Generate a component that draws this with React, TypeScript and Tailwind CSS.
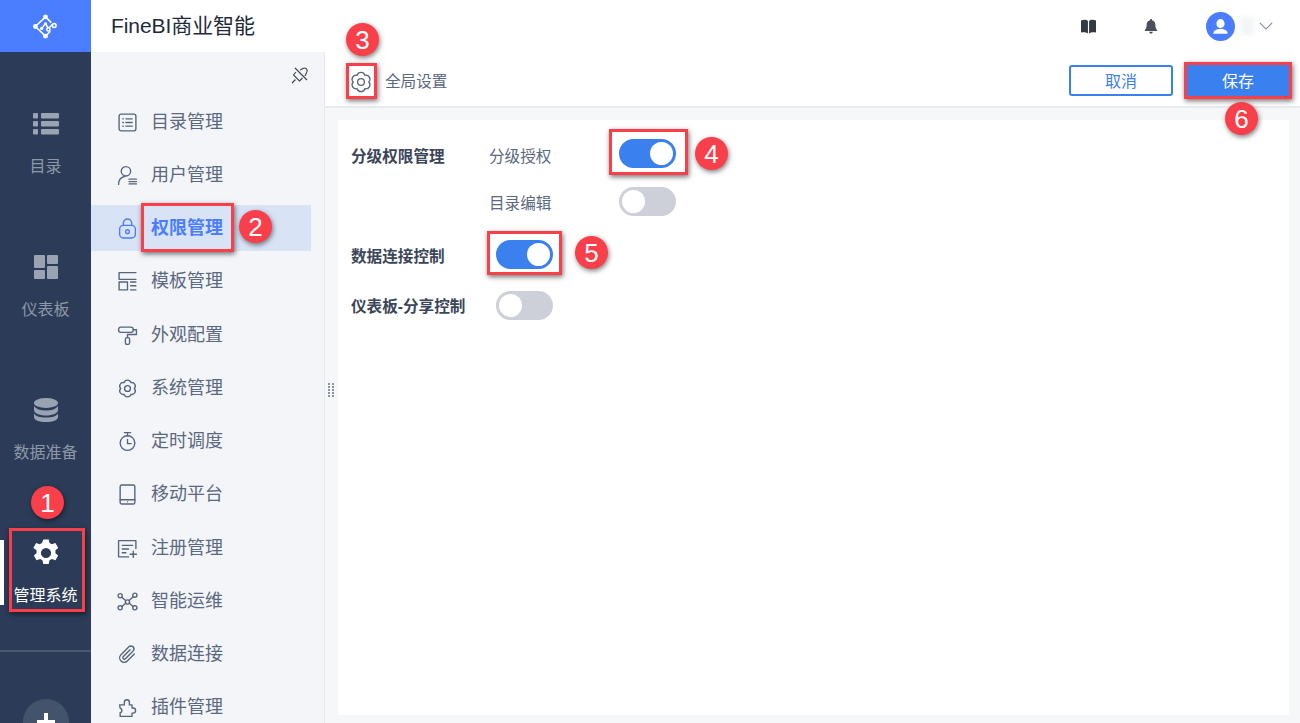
import React from "react";

const I = "w-[21px] h-[21px] text-[#56647c] shrink-0";

function Svg({ children, className = I }: { children: React.ReactNode; className?: string }) {
  return (
    <svg viewBox="0 0 20 20" fill="none" stroke="currentColor" strokeWidth="1.300" strokeLinecap="round" strokeLinejoin="round" className={className}>
      {children}
    </svg>
  );
}

const GearPath = "M16.500 10A3.400 3.400 0 0 1 13.250 15.630A3.400 3.400 0 0 1 6.750 15.630A3.400 3.400 0 0 1 3.500 10A3.400 3.400 0 0 1 6.750 4.370A3.400 3.400 0 0 1 13.250 4.370A3.400 3.400 0 0 1 16.500 10z";

const menu: [string, React.ReactNode][] = [
  ["目录管理", <Svg><rect x="2" y="2" width="16" height="16" rx="2" /><path d="M5.500 6.500h.6M5.500 10h.6M5.500 13.500h.6M8.500 6.500h6M8.500 10h6M8.500 13.500h6" /></Svg>],
  ["用户管理", <Svg><circle cx="8.500" cy="6" r="4.500" /><path d="M1.500 18.500c0-4.500 2.500-7 6-7.800" /><path d="M11.500 13.500h7M11.500 15.800h7M11.500 18h7" /></Svg>],
  ["权限管理", <Svg className="h-[21px] w-[21px] shrink-0 text-[#4a7dff]"><rect x="2.500" y="7" width="15" height="12" rx="3.500" /><path d="M6 7V5a4 4 0 0 1 8 0v2" /><circle cx="10" cy="13" r="1.800" /></Svg>],
  ["模板管理", <Svg><path d="M18 1.500H2v6.500h16M2 10.500h8v7.500H2zM13 10.500h5M13 14h5M13 18h5" /></Svg>],
  ["外观配置", <Svg><rect x="1.500" y="2" width="14" height="5" rx="2.200" /><path d="M15.500 4.500h3v4.500H10v3" /><rect x="8" y="12" width="4" height="6.500" rx="1.500" /></Svg>],
  ["系统管理", <Svg><path d={GearPath} /><circle cx="10" cy="10" r="2.800" /></Svg>],
  ["定时调度", <Svg><circle cx="10" cy="11.500" r="7" /><path d="M7 1.500h6M10 1.500v3M10 8v4h3.500" /></Svg>],
  ["移动平台", <Svg><rect x="3" y="1" width="14" height="18" rx="1.500" /><path d="M3 15h14M10 17h.1" /></Svg>],
  ["注册管理", <Svg><path d="M18 10V2.500H1.500v15.500H11" /><path d="M5 7h10M5 10.500h6M5 14h3.500M15.500 12.500v6M12.500 15.500h6" /></Svg>],
  ["智能运维", <Svg><circle cx="3" cy="4.500" r="2" /><circle cx="17" cy="4" r="2" /><circle cx="3" cy="16" r="2" /><circle cx="17" cy="16" r="2" /><circle cx="10" cy="10.500" r="2" /><path d="m4.600 6 3.800 3.200M15.500 5.500l-4 3.600M4.600 14.700l3.800-3M15.400 14.700l-3.800-3" /></Svg>],
  ["数据连接", <Svg><path d="M16.500 9.500 9.800 16.200a4.200 4.200 0 0 1-6-6l7.500-7.500a2.800 2.800 0 0 1 4 4l-7.300 7.300a1.400 1.400 0 0 1-2-2L12.500 5.500" /></Svg>],
  ["插件管理", <Svg><path d="M2.500 7.500h4.500V5a2.400 2.400 0 0 1 4.800 0v2.500h2.500v3h1a2.400 2.400 0 0 1 0 4.800h-1v3.200H3v-3.500a2.200 2.200 0 0 0 0-4.300z" /></Svg>],
];

function Toggle({ on }: { on?: boolean }) {
  return (
    <div className={`flex h-[29px] w-[57px] shrink-0 rounded-full p-[3px] ${on ? "justify-end bg-[#3a80ee]" : "justify-start bg-[#cdd0d8]"}`}>
      <div className="h-[23px] w-[23px] rounded-full bg-white" />
    </div>
  );
}

function RailItem({ label, icon, active }: { label: string; icon: React.ReactNode; active?: boolean }) {
  return (
    <div className={`relative mb-[76px] flex flex-col items-center gap-[19px] ${active ? "text-white" : "text-[#8e98a9]"}`}>
      {active && <div className="absolute -top-px left-0 h-[65px] w-[4px] bg-white" />}
      <div className="flex h-6 items-center justify-center">{icon}</div>
      <div className="text-[16px] leading-6 whitespace-nowrap">{label}</div>
    </div>
  );
}

function Box({ className }: { className: string }) {
  return <div className={`absolute border-[3px] border-[#f9404a] shadow-[1px_2px_5px_rgba(0,0,0,0.55)] ${className}`} />;
}

function Num({ n, className }: { n: number; className: string }) {
  return (
    <div className={`absolute flex h-[33px] w-[33px] items-center justify-center rounded-full bg-[#f9404a] text-[26px] leading-none text-white shadow-[1px_2px_5px_rgba(0,0,0,0.5)] ${className}`}>
      {n}
    </div>
  );
}

export default function App() {
  return (
    <div className="relative flex h-[723px] w-[1300px] overflow-hidden bg-white font-['Liberation_Sans','Noto_Sans_CJK_SC',sans-serif]">
      {/* rail */}
      <aside className="flex h-full w-[91px] shrink-0 flex-col bg-[#2c3c58]">
        <div className="flex h-[52px] shrink-0 items-center justify-center bg-[#4a7dff]">
          <svg viewBox="0 0 28 28" className="h-[27px] w-[27px] text-white" fill="none" stroke="currentColor" strokeWidth="1.600">
            <path d="M14 4 3.500 14 14 24M14 4l6 6M14 24l5-5M10 16l4-5 3 5 4-4" />
            <g fill="currentColor" stroke="none">
              <circle cx="14" cy="4" r="2.500" />
              <circle cx="3.500" cy="14" r="2.500" />
              <circle cx="14" cy="24" r="2.500" />
              <circle cx="10" cy="16" r="1.700" />
              <circle cx="14" cy="11" r="1.500" />
            </g>
            <circle cx="23" cy="13" r="2" fill="#4a7dff" />
            <circle cx="17" cy="17" r="1.700" fill="#4a7dff" />
          </svg>
        </div>
        <nav className="flex flex-col pt-[60px]">
          <RailItem
            label="目录"
            icon={
              <svg viewBox="0 0 26 22" className="h-[22px] w-[26px] text-[#9aa3b2]" fill="currentColor">
                <rect x="0" y="0" width="5" height="5.500" rx="1" />
                <rect x="0" y="8" width="5" height="5.500" rx="1" />
                <rect x="0" y="16" width="5" height="5.500" rx="1" />
                <rect x="8" y="0" width="18" height="5.500" rx="1" />
                <rect x="8" y="8" width="18" height="5.500" rx="1" />
                <rect x="8" y="16" width="18" height="5.500" rx="1" />
              </svg>
            }
          />
          <RailItem
            label="仪表板"
            icon={
              <svg viewBox="0 0 24 24" className="h-6 w-6 text-[#9aa3b2]" fill="currentColor">
                <rect x="0" y="0" width="11" height="13" rx="1" />
                <rect x="13" y="0" width="11" height="9" rx="1" />
                <rect x="0" y="15" width="11" height="9" rx="1" />
                <rect x="13" y="11" width="11" height="13" rx="1" />
              </svg>
            }
          />
          <RailItem
            label="数据准备"
            icon={
              <svg viewBox="0 0 24 24" className="h-6 w-6 text-[#9aa3b2]" fill="currentColor">
                <ellipse cx="12" cy="5" rx="12" ry="5" />
                <path d="M0 8c2 3 6 4.500 12 4.500S22 11 24 8v4c0 3-5 5.500-12 5.500S0 15 0 12z" />
                <path d="M0 15.500c2 3 6 4 12 4s10-1 12-4V19c0 3-5 5-12 5S0 22 0 19z" />
              </svg>
            }
          />
          <RailItem
            label="管理系统"
            active
            icon={
              <svg viewBox="0 0 20 20" className="h-[32px] w-[32px] shrink-0 text-white">
                <path fillRule="evenodd" fill="currentColor" d="M8.300 1.500h3.400l.5 2.300 1.500.8 2.200-.8 1.700 3-1.700 1.500v1.800l1.700 1.500-1.700 3-2.200-.8-1.500.8-.5 2.300H8.300l-.5-2.300-1.500-.8-2.200.8-1.700-3 1.700-1.500V8.300L2.100 6.800l1.700-3 2.200.8 1.500-.8zM10 6.800a3.200 3.200 0 1 0 0 6.400 3.200 3.200 0 0 0 0-6.400z" />
              </svg>
            }
          />
        </nav>
        <div className="-mt-[34px] h-[2px] w-full shrink-0 bg-[#4a5870]" />
        <div className="mt-[47px] flex h-[46px] w-[46px] shrink-0 items-start justify-center self-center rounded-full bg-[#44536c] pt-[14px]">
          <svg viewBox="0 0 18 18" className="h-[18px] w-[18px] text-white" fill="none" stroke="currentColor" strokeWidth="4">
            <path d="M9 0v18M0 9h18" />
          </svg>
        </div>
      </aside>

      <div className="flex h-full min-w-0 flex-1 flex-col">
        {/* top bar */}
        <header className="flex h-[52px] shrink-0 items-center bg-white pl-[20px] pr-[27px]">
          <div className="-mt-[2px] text-[21px] leading-none tracking-[-0.08px] text-[#1f2a3a]">FineBI商业智能</div>
          <div className="ml-auto flex items-center">
            <svg viewBox="0 0 18 16" className="h-[15px] w-[17px] text-[#333a44]" fill="currentColor">
              <path d="M1 1.500c3-1 6-1 7.400.6V15.500C6.500 14 3.500 14 1 14.500zM17 1.500c-3-1-6-1-7.400.6V15.500c1.900-1.500 4.900-1.500 7.400-1z" />
            </svg>
            <svg viewBox="0 0 16 18" className="ml-[47px] h-[17px] w-[14px] text-[#4a4f58]" fill="currentColor">
              <path d="M8 0.500c.8 0 1.200.6 1.200 1.300C12 2.500 13 4.800 13 7.500c0 3 1 4.500 2 5.500v1H1v-1c1-1 2-2.500 2-5.500 0-2.700 1-5 3.800-5.700C6.800 1.100 7.200.5 8 .5zM6 15h4c0 1.200-.8 2.200-2 2.200S6 16.200 6 15z" />
            </svg>
            <div className="ml-[48px] flex h-[29px] w-[29px] items-center justify-center rounded-full bg-[#4a7dff]">
              <svg viewBox="0 0 20 20" className="h-[19px] w-[19px] text-white" fill="currentColor">
                <ellipse cx="10" cy="7" rx="4.300" ry="4.800" />
                <path d="M2.500 17.500c0-3.500 3-5 7.500-5s7.500 1.500 7.500 5z" />
              </svg>
            </div>
            <div className="ml-[5px] h-[18px] w-[14px] bg-[#f4f5f6] blur-[2px]" />
            <svg viewBox="0 0 16 9" className="ml-[5px] h-[8px] w-[14px] text-[#7d8694]" fill="none" stroke="currentColor" strokeWidth="1.200">
              <path d="m1 1 7 7 7-7" />
            </svg>
          </div>
        </header>

        <div className="flex min-h-0 flex-1">
          {/* sidebar */}
          <aside className="flex h-full w-[234px] shrink-0 flex-col overflow-hidden border-r border-[#e6e9ef] bg-[#f3f5f9]">
            <div className="flex h-[46px] shrink-0 justify-end pr-[15px] pt-[14px]">
              <svg viewBox="0 0 18 18" className="h-[18px] w-[18px] text-[#3b4450]" fill="none" stroke="currentColor" strokeWidth="1.100">
                <path d="M9 4 12 2.500c1-.8 2-.7 3 0l.7.7c.7 1 .7 2 0 3L14 10M5 6 2.500 9l6 6 3-3M1 17l3.500-3.500M4 2l12 12" />
              </svg>
            </div>
            {menu.map(([label, icon], i) => {
              const active = i === 2;
              return (
                <div
                  key={label}
                  className={`mb-[7.270px] flex h-[46px] w-[220px] shrink-0 items-center gap-[13.500px] pl-[25.500px] pt-[2px] text-[18px] ${active ? "bg-[#d9e3f6] font-bold text-[#4a7dff]" : "text-[#5a6880]"}`}
                >
                  {icon}
                  <span className="whitespace-nowrap">{label}</span>
                </div>
              );
            })}
          </aside>

          {/* main */}
          <main className="relative flex min-w-0 flex-1 flex-col">
            <div className="flex h-[56px] shrink-0 items-center border-b-2 border-[#e9ebef] bg-white pl-[24px] pr-[11px]">
              <svg viewBox="0 0 20 20" className="mt-[6px] h-6 w-6 text-[#56647c]" fill="none" stroke="currentColor" strokeWidth="1.100" strokeLinejoin="round">
                <path d={GearPath} />
                <circle cx="10" cy="10" r="2.800" />
              </svg>
              <span className="ml-[12px] pt-[6px] text-[15.600px] text-[#5a6880]">全局设置</span>
              <button className="ml-auto mt-[2px] h-[31px] w-[104px] rounded-[3px] border-2 border-[#3a80ee] bg-white pt-[3px] text-[16px] leading-none text-[#3a80ee]">取消</button>
              <button className="ml-[14px] mt-[2px] h-[31px] w-[102px] bg-[#3a80ee] pt-[3px] text-[16px] leading-none text-white">保存</button>
            </div>
            <div className="flex min-h-0 flex-1 flex-col bg-[#f5f7f9] pb-2 pl-[13px] pr-[11px] pt-3">
              <div className="flex flex-1 flex-col bg-white pl-[13px] pt-[19px] text-[15.600px]">
                <div className="flex">
                  <div className="mt-[6px] w-[138px] font-bold text-[#3a4558]">分级权限管理</div>
                  <div className="flex flex-col gap-[18px]">
                    <div className="flex items-center">
                      <span className="w-[130px] pt-[6px] text-[#5a6880]">分级授权</span>
                      <Toggle on />
                    </div>
                    <div className="flex items-center">
                      <span className="w-[130px] pt-[6px] text-[#5a6880]">目录编辑</span>
                      <Toggle />
                    </div>
                  </div>
                </div>
                <div className="mt-[24px] flex items-center">
                  <span className="w-[145px] pt-[4px] font-bold text-[#3a4558]">数据连接控制</span>
                  <Toggle on />
                </div>
                <div className="mt-[22px] flex items-center">
                  <span className="w-[145px] pt-[3px] font-bold text-[#3a4558]">仪表板-分享控制</span>
                  <Toggle />
                </div>
              </div>
            </div>
            {/* drag handle */}
            <div className="absolute left-[3px] top-[331px] grid grid-cols-2 gap-x-[2px] gap-y-[1px]">
              {Array.from({ length: 10 }).map((_, i) => (
                <div key={i} className="h-[2px] w-[2px] bg-[#8b93a0]" />
              ))}
            </div>
          </main>
        </div>
      </div>

      {/* annotations */}
      <Box className="left-[9px] top-[528px] h-[84px] w-[76px]" />
      <Box className="left-[141px] top-[203px] h-[49px] w-[93px]" />
      <Box className="left-[346px] top-[63px] h-[36px] w-[31px]" />
      <Box className="left-[609px] top-[129px] h-[46px] w-[79px]" />
      <Box className="left-[487px] top-[231px] h-[44px] w-[75px]" />
      <Box className="left-[1184px] top-[62px] h-[37px] w-[108px]" />
      <Num n={1} className="left-[31px] top-[486px]" />
      <Num n={2} className="left-[239px] top-[210px]" />
      <Num n={3} className="left-[346px] top-[23px]" />
      <Num n={4} className="left-[695px] top-[137px]" />
      <Num n={5} className="left-[575px] top-[236px]" />
      <Num n={6} className="left-[1225px] top-[102px]" />
    </div>
  );
}
